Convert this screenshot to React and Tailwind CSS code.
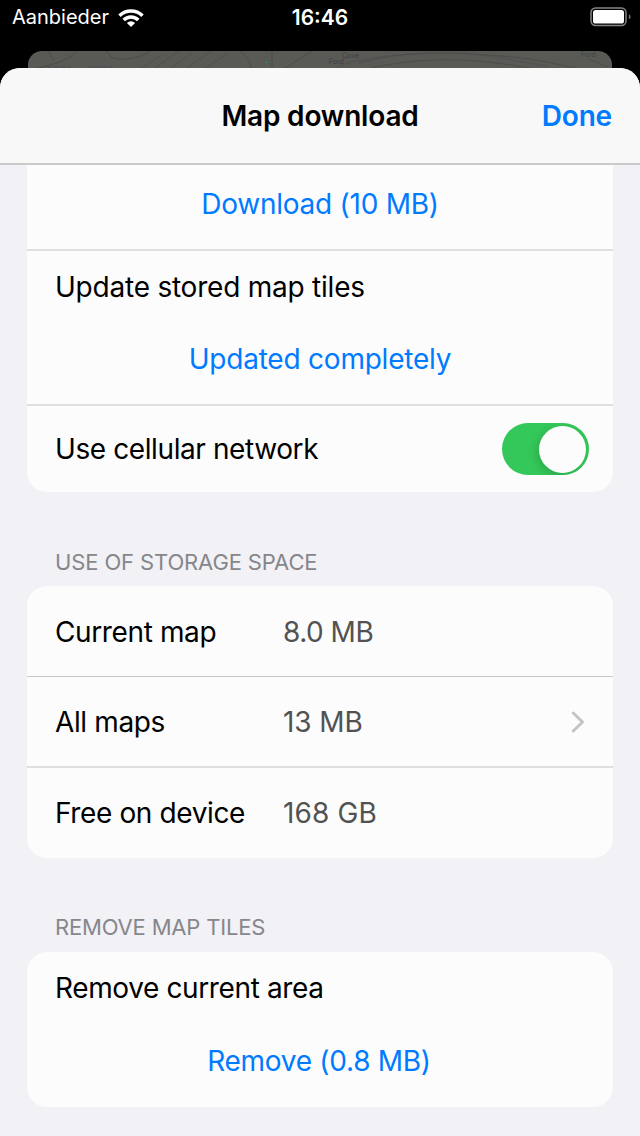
const labelBase = "whitespace-nowrap text-[28px] leading-[34px]";

function WifiIcon() {
  return (
    <svg className="ml-[9px] h-[18px] w-[26px]" viewBox="0 0 26 18" fill="none" stroke="#fff" strokeWidth="3.6">
      <path d="M1.500 6.700a16.400 16.400 0 0 1 23 0" />
      <path d="M5.700 11.100a10.300 10.300 0 0 1 14.600 0" />
      <path d="M13 18l-4.100-4.100a5.900 5.900 0 0 1 8.200 0z" fill="#fff" stroke="none" />
    </svg>
  );
}

function BatteryIcon() {
  return (
    <svg className="h-[20px] w-[42px]" viewBox="0 0 42 20" fill="none">
      <rect x="1" y="1" width="35" height="17.5" rx="4.5" stroke="#858585" strokeWidth="1.5" />
      <rect x="3" y="3" width="31" height="13.5" rx="2.6" fill="#fff" />
      <path d="M38.900 7.300v5c1.100-.5 1.600-1.400 1.600-2.500s-.5-2-1.600-2.500z" fill="#777" />
    </svg>
  );
}

function MapPeek() {
  return (
    <div className="mx-[28px] h-[34px] overflow-hidden rounded-t-[14px] bg-[#595955]">
      <svg className="h-[18px] w-[584px]" viewBox="0 0 584 18" fill="none">
        <g stroke="#4f4a45" strokeWidth="1">
          <path d="M6 18C20 14 38 12 49 0" />
          <path d="M20 0c4 4 3 8 6 10M78 0c6 4 2 8 14 8s22-2 30-8" />
          <path d="M112 18l22-14M126 18l24-18M142 18l22-16M158 18l25-18M176 18l24-16" opacity=".6" />
          <path d="M212 0c6 4 10 10 11 18M244 0v18M256 18l28-18" opacity=".8" />
          <path d="M330 12c40-10 74-12 130-8s70 10 92 14" opacity=".8" />
          <path d="M342 17c50-10 90-12 160 0M560 8c8 2 14 6 20 8" opacity=".8" />
        </g>
        <g stroke="#485154" strokeWidth="1">
          <path d="M12 16h30M60 16h24" strokeDasharray="5 2" />
          <path d="M310 16c20-10 70-15 130-14M440 3c30 2 50 8 80 12" opacity=".7" />
        </g>
        <g fill="#3e4040" fontSize="7" fontFamily="Inter, sans-serif">
          <text x="301" y="13">Ford</text>
          <text x="314" y="7">Cove</text>
          <text x="553" y="6">Ford</text>
        </g>
        <rect x="238" y="11" width="1" height="1" fill="#16c44c" />
      </svg>
    </div>
  );
}

function Toggle() {
  return (
    <div className="flex h-[52px] w-[87px] items-center justify-end overflow-hidden rounded-full bg-[#34c759] pr-[3px]">
      <div className="size-[47px] rounded-full bg-[#fcfcfc] shadow-[-2px_3px_8px_rgba(0,0,0,0.15)]" />
    </div>
  );
}

function Heading({ children, className }) {
  return <h2 className={`whitespace-nowrap pl-[28px] text-[22px] leading-[28px] text-[#86868b] ${className}`}>{children}</h2>;
}

function StorageRow({ label, value, valueClass, chevron, className }) {
  return (
    <div className={`flex items-center px-[28px] ${className}`}>
      <span className={`${labelBase} w-[228px] tracking-[-0.38px]`}>{label}</span>
      <span className={`${labelBase} flex-1 text-[#525252] ${valueClass}`}>{value}</span>
      {chevron && (
        <svg className="h-[22px] w-[14px]" viewBox="0 0 14 22" fill="none" stroke="#c4c4c6" strokeWidth="3" strokeLinecap="round" strokeLinejoin="round">
          <path d="M2.300 2l9.200 9-9.200 9" />
        </svg>
      )}
    </div>
  );
}

export default function App() {
  return (
    <div className="flex h-[1136px] w-[640px] flex-col overflow-hidden bg-black font-['Inter','Liberation_Sans',sans-serif] text-black">
      <div className="grid h-[51px] shrink-0 grid-cols-3 items-start pt-[4px] text-[20px] leading-[27px] text-white">
        <div className="flex items-center pl-[12px]">
          <span>Aanbieder</span>
          <WifiIcon />
        </div>
        <div className="text-center text-[21px] font-semibold">16:46</div>
        <div className="flex justify-end pr-[8px] pt-[3px]">
          <BatteryIcon />
        </div>
      </div>

      <MapPeek />

      <div className="relative -mt-[17px] flex flex-1 flex-col overflow-hidden rounded-t-[20px] bg-[#f1f1f6]">
        <header className="grid h-[97px] shrink-0 grid-cols-3 items-center border-b-2 border-[#cacacb] bg-[#f8f8f8] px-[28px] text-[28px] font-semibold leading-[34px] tracking-[-0.18px]">
          <h1 className="col-start-2 justify-self-center whitespace-nowrap">Map download</h1>
          <button className="justify-self-end text-[#007aff]">Done</button>
        </header>

        <main className="px-[27px]">
          <section className="rounded-b-[20px] bg-[#fcfcfc]">
            <div className="flex h-[84px] justify-center pt-[22px]">
              <button className={`${labelBase} h-[34px] tracking-[-0.25px] text-[#007aff]`}>Download (10 MB)</button>
            </div>
            <div className="flex h-[155px] flex-col border-t-2 border-[#dfdfe0] pl-[28px] pt-[19px]">
              <span className={`${labelBase} tracking-[-0.22px]`}>Update stored map tiles</span>
              <button className={`${labelBase} mr-[28px] mt-[38px] tracking-[-0.22px] text-[#007aff]`}>Updated completely</button>
            </div>
            <div className="flex h-[88px] items-center justify-between border-t-2 border-[#dfdfe0] pl-[28px] pr-[24px]">
              <span className={`${labelBase} tracking-[-0.4px]`}>Use cellular network</span>
              <Toggle />
            </div>
          </section>

          <Heading className="mt-[56px] tracking-[-0.13px]">USE OF STORAGE SPACE</Heading>
          <section className="mt-[10px] rounded-[20px] bg-[#fcfcfc]">
            <StorageRow className="h-[90px] pt-[2px]" label="Current map" value="8.0 MB" valueClass="tracking-[-0.5px]" />
            <StorageRow className="h-[90px] border-t border-[#c8c8c9] pt-px" label="All maps" value="13 MB" valueClass="tracking-[-0.1px]" chevron />
            <StorageRow className="h-[92px] border-t-2 border-[#dfdfe0]" label="Free on device" value="168 GB" valueClass="tracking-[0.15px]" />
          </section>

          <Heading className="mt-[55px] tracking-[-0.18px]">REMOVE MAP TILES</Heading>
          <section className="mt-[11px] flex h-[155px] flex-col rounded-[20px] bg-[#fcfcfc] pl-[28px] pt-[19px]">
            <span className={`${labelBase} tracking-[-0.38px]`}>Remove current area</span>
            <button className={`${labelBase} mr-[30px] mt-[39px] tracking-[-0.28px] text-[#007aff]`}>Remove (0.8 MB)</button>
          </section>
        </main>
      </div>
    </div>
  );
}
